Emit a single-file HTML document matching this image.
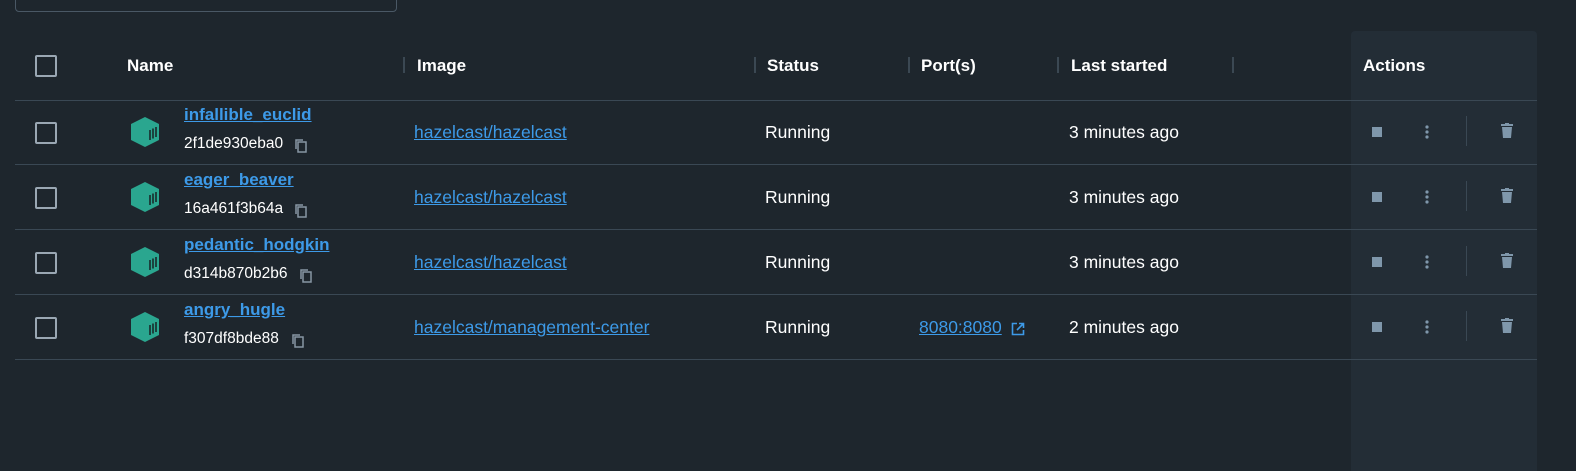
<!DOCTYPE html><html><head><style>
body{margin:0;width:1576px;height:459px;background:#1e262d;font-family:"Liberation Sans",sans-serif;color:#fff;position:relative;overflow:hidden}
.a{position:absolute;white-space:nowrap}
.act{left:1351px;top:31px;width:186px;height:440px;background:#232d36;border-radius:4px 4px 0 0}
.cb{width:18px;height:18px;border:2px solid #9aa7b3;border-radius:2px}
.h{font-weight:bold;font-size:17px;top:56px}
.sep{width:2px;height:16px;background:#3b4853;top:57px}
.line{left:15px;width:1522px;height:1px;background:#3a4854}
.lnk{color:#3d9ae8;text-decoration:underline}
.nm{font-weight:bold;font-size:17px}
.t{font-size:17.5px}
.id{font-size:15.5px}
.stop{width:10px;height:10px;background:#7f97ab}
.vd{width:1px;height:30px;background:#3a4854}
</style></head><body>
<div class="a" style="left:15px;top:-20px;width:380px;height:30px;border:1px solid #4a5865;border-radius:4px"></div>
<div class="a act"></div>
<div class="a cb" style="left:35px;top:55px"></div>
<div class="a h" style="left:127px">Name</div>
<div class="a sep" style="left:403px"></div><div class="a h" style="left:417px">Image</div>
<div class="a sep" style="left:754px"></div><div class="a h" style="left:767px">Status</div>
<div class="a sep" style="left:908px"></div><div class="a h" style="left:921px">Port(s)</div>
<div class="a sep" style="left:1057px"></div><div class="a h" style="left:1071px">Last started</div>
<div class="a sep" style="left:1232px"></div>
<div class="a h" style="left:1363px">Actions</div>
<div class="a line" style="top:100px"></div>
<div class="a line" style="top:164px"></div>
<div class="a line" style="top:229px"></div>
<div class="a line" style="top:294px"></div>
<div class="a line" style="top:359px"></div>
<script>
var rows=[["infallible_euclid","2f1de930eba0","hazelcast/hazelcast","","3 minutes ago"],["eager_beaver","16a461f3b64a","hazelcast/hazelcast","","3 minutes ago"],["pedantic_hodgkin","d314b870b2b6","hazelcast/hazelcast","","3 minutes ago"],["angry_hugle","f307df8bde88","hazelcast/management-center","8080:8080","2 minutes ago"]];
var h="";
rows.forEach(function(r,i){var y=100+i*65,c=y+32;
h+='<div class="a cb" style="left:35px;top:'+(c-10)+'px"></div>';
h+='<svg class="a" style="left:128px;top:'+(c-17)+'px" width="34" height="34" viewBox="0 0 34 34"><path d="M17 2 L31 9 L31 25 L17 32 L3 25 L3 9 Z" fill="#2aa68f"/><path d="M22 15v10M25 13.5v10M28 12v10" stroke="#1a2a2a" stroke-width="1.6"/></svg>';
h+='<div class="a nm lnk" style="left:184px;top:'+(y+5)+'px">'+r[0]+'</div>';
h+='<div class="a id" style="left:184px;top:'+(y+35)+'px">'+r[1]+'</div>';
var cx=[294,294,299,291][i];
h+='<svg class="a" style="left:'+cx+'px;top:'+(y+38)+'px" width="14" height="16" viewBox="0 0 14 16"><rect x="4" y="4" width="8" height="10" fill="none" stroke="#8796a3" stroke-width="1.5"/><path d="M2 11V2h7" fill="none" stroke="#8796a3" stroke-width="1.5"/></svg>';
h+='<div class="a t lnk" style="left:414px;top:'+(c-10)+'px">'+r[2]+'</div>';
h+='<div class="a t" style="left:765px;top:'+(c-10)+'px">Running</div>';
if(r[3]){h+='<div class="a t lnk" style="left:919px;top:'+(c-10)+'px">'+r[3]+'</div>';
h+='<svg class="a" style="left:1011px;top:'+(c-5)+'px" width="14" height="14" viewBox="0 0 14 14"><path d="M6 1.5H1.5v11h11V8M8 1.5h4.5V6M12.5 1.5L6 8" fill="none" stroke="#3d9ae8" stroke-width="1.6"/></svg>';}
h+='<div class="a t" style="left:1069px;top:'+(c-10)+'px">'+r[4]+'</div>';
h+='<div class="a stop" style="left:1372px;top:'+(c-5)+'px"></div>';
h+='<svg class="a" style="left:1424px;top:'+(c-8)+'px" width="6" height="16"><circle cx="3" cy="3" r="1.6" fill="#7f97ab"/><circle cx="3" cy="8" r="1.6" fill="#7f97ab"/><circle cx="3" cy="13" r="1.6" fill="#7f97ab"/></svg>';
h+='<div class="a vd" style="left:1466px;top:'+(c-16)+'px"></div>';
h+='<svg class="a" style="left:1500px;top:'+(c-9)+'px" width="14" height="16" viewBox="0 0 14 16"><rect x="1" y="1" width="12" height="2" fill="#7f97ab"/><rect x="5" y="0" width="4" height="1.5" fill="#7f97ab"/><path d="M2 4h10l-1 11H3z" fill="#7f97ab"/></svg>';
});
document.write(h);
</script>
</body></html>
